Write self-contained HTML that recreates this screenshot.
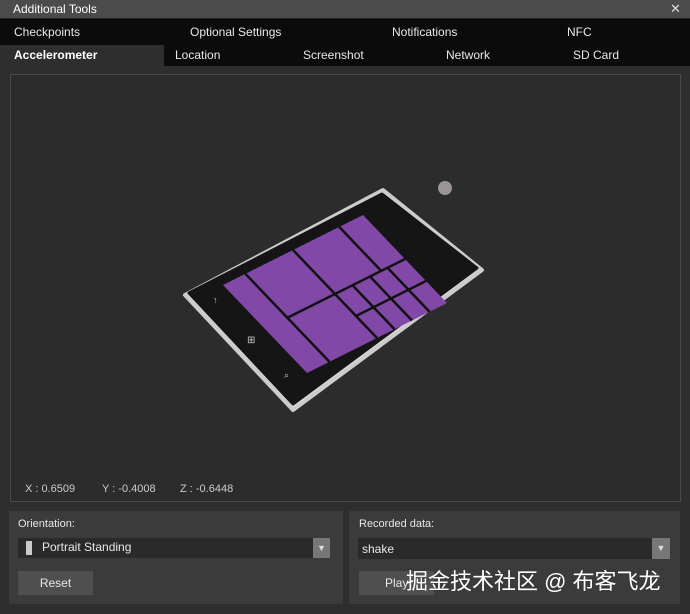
<!DOCTYPE html>
<html><head><style>
body{margin:0;width:690px;height:614px;background:#2e2e2e;font-family:"Liberation Sans",sans-serif;color:#e8e8e8;font-size:12px;overflow:hidden;position:relative}
.a{position:absolute}
</style></head><body>
<div class="a" style="left:0;top:0;width:690px;height:18px;background:#4b4b4b;border-bottom:1px solid #222"></div>
<div class="a" style="left:13px;top:2px;font-size:12px;color:#fff">Additional Tools</div>
<div class="a" style="left:670px;top:1px;font-size:13px;color:#ddd">✕</div>
<div class="a" style="left:0;top:19px;width:690px;height:47px;background:#0b0b0b"></div>
<div class="a" style="left:0;top:45px;width:164px;height:22px;background:#2e2e2e"></div>
<div class="a" style="left:14px;top:25px">Checkpoints</div>
<div class="a" style="left:190px;top:25px">Optional Settings</div>
<div class="a" style="left:392px;top:25px">Notifications</div>
<div class="a" style="left:567px;top:25px">NFC</div>
<div class="a" style="left:14px;top:48px;font-weight:bold;color:#fff">Accelerometer</div>
<div class="a" style="left:175px;top:48px">Location</div>
<div class="a" style="left:303px;top:48px">Screenshot</div>
<div class="a" style="left:446px;top:48px">Network</div>
<div class="a" style="left:573px;top:48px">SD Card</div>
<div class="a" style="left:10px;top:74px;width:669px;height:426px;border:1px solid #4a4a4a;background:#2c2c2c"></div>
<svg class="a" style="left:0;top:0" width="690" height="614">
<circle cx="345" cy="280" r="190" fill="none" stroke="#3a3a3a" stroke-dasharray="1 4"/>
<circle cx="445" cy="188" r="7" fill="#9a9494"/>
<polygon points="185,295 383,190 482,270 293,410" fill="#d8d8d8" stroke="#ccc" stroke-linejoin="round" stroke-width="4"/>
<polygon points="189,293 382,194 477,268 293,404" fill="#151515" stroke-linejoin="round" stroke-width="3" stroke="#151515"/>
<g transform="matrix(140,-70,84,88,223,285)">
<polygon points="0,0 1,0 1,1 0,1" fill="#8148a8"/>
<g stroke="#111" fill="none">
<line x1="0.16" y1="0" x2="0.16" y2="1" stroke-width="2.5" vector-effect="non-scaling-stroke"/>
<line x1="0.5" y1="0" x2="0.5" y2="1" stroke-width="2.5" vector-effect="non-scaling-stroke"/>
<line x1="0.16" y1="0.5" x2="1" y2="0.5" stroke-width="2.5" vector-effect="non-scaling-stroke"/>
<line x1="0.83" y1="0" x2="0.83" y2="0.5" stroke-width="2.5" vector-effect="non-scaling-stroke"/>
<line x1="0.5" y1="0.75" x2="1" y2="0.75" stroke-width="2.5" vector-effect="non-scaling-stroke"/>
<line x1="0.625" y1="0.5" x2="0.625" y2="1" stroke-width="2.5" vector-effect="non-scaling-stroke"/>
<line x1="0.75" y1="0.5" x2="0.75" y2="1" stroke-width="2.5" vector-effect="non-scaling-stroke"/>
<line x1="0.875" y1="0.5" x2="0.875" y2="1" stroke-width="2.5" vector-effect="non-scaling-stroke"/>
</g>
</g>
<text x="213" y="303" fill="#ccc" font-size="9">↑</text>
<text x="247" y="343" fill="#ccc" font-size="10">⊞</text>
<text x="284" y="378" fill="#ccc" font-size="9">⌕</text>
</svg>
<div class="a" style="left:25px;top:483px;font-size:11px;color:#ccc">X : 0.6509</div>
<div class="a" style="left:102px;top:483px;font-size:11px;color:#ccc">Y : -0.4008</div>
<div class="a" style="left:180px;top:483px;font-size:11px;color:#ccc">Z : -0.6448</div>
<div class="a" style="left:9px;top:511px;width:334px;height:93px;background:#3b3b3b"></div>
<div class="a" style="left:349px;top:511px;width:331px;height:93px;background:#3b3b3b"></div>
<div class="a" style="left:18px;top:518px;font-size:11px">Orientation:</div>
<div class="a" style="left:18px;top:538px;width:296px;height:20px;background:#2a2a2a"></div>
<div class="a" style="left:26px;top:541px;width:6px;height:14px;background:#ccc"></div>
<div class="a" style="left:42px;top:540px">Portrait Standing</div>
<div class="a" style="left:313px;top:538px;width:17px;height:20px;background:#777;color:#ddd;font-size:9px;text-align:center;line-height:20px">▼</div>
<div class="a" style="left:18px;top:571px;width:75px;height:24px;background:#4f4f4f;text-align:center;line-height:24px">Reset</div>
<div class="a" style="left:359px;top:518px;font-size:11px">Recorded data:</div>
<div class="a" style="left:358px;top:538px;width:294px;height:21px;background:#2a2a2a"></div>
<div class="a" style="left:362px;top:542px">shake</div>
<div class="a" style="left:652px;top:538px;width:18px;height:21px;background:#777;color:#ddd;font-size:9px;text-align:center;line-height:21px">▼</div>
<div class="a" style="left:359px;top:571px;width:75px;height:24px;background:#4f4f4f;line-height:24px;padding-left:26px;box-sizing:border-box">Play</div>
<div class="a" style="left:406px;top:564px;font-size:22px;color:#fff;font-family:'Liberation Sans','Noto Sans CJK SC',sans-serif;white-space:nowrap">掘金技术社区 @ 布客飞龙</div>
</body></html>
